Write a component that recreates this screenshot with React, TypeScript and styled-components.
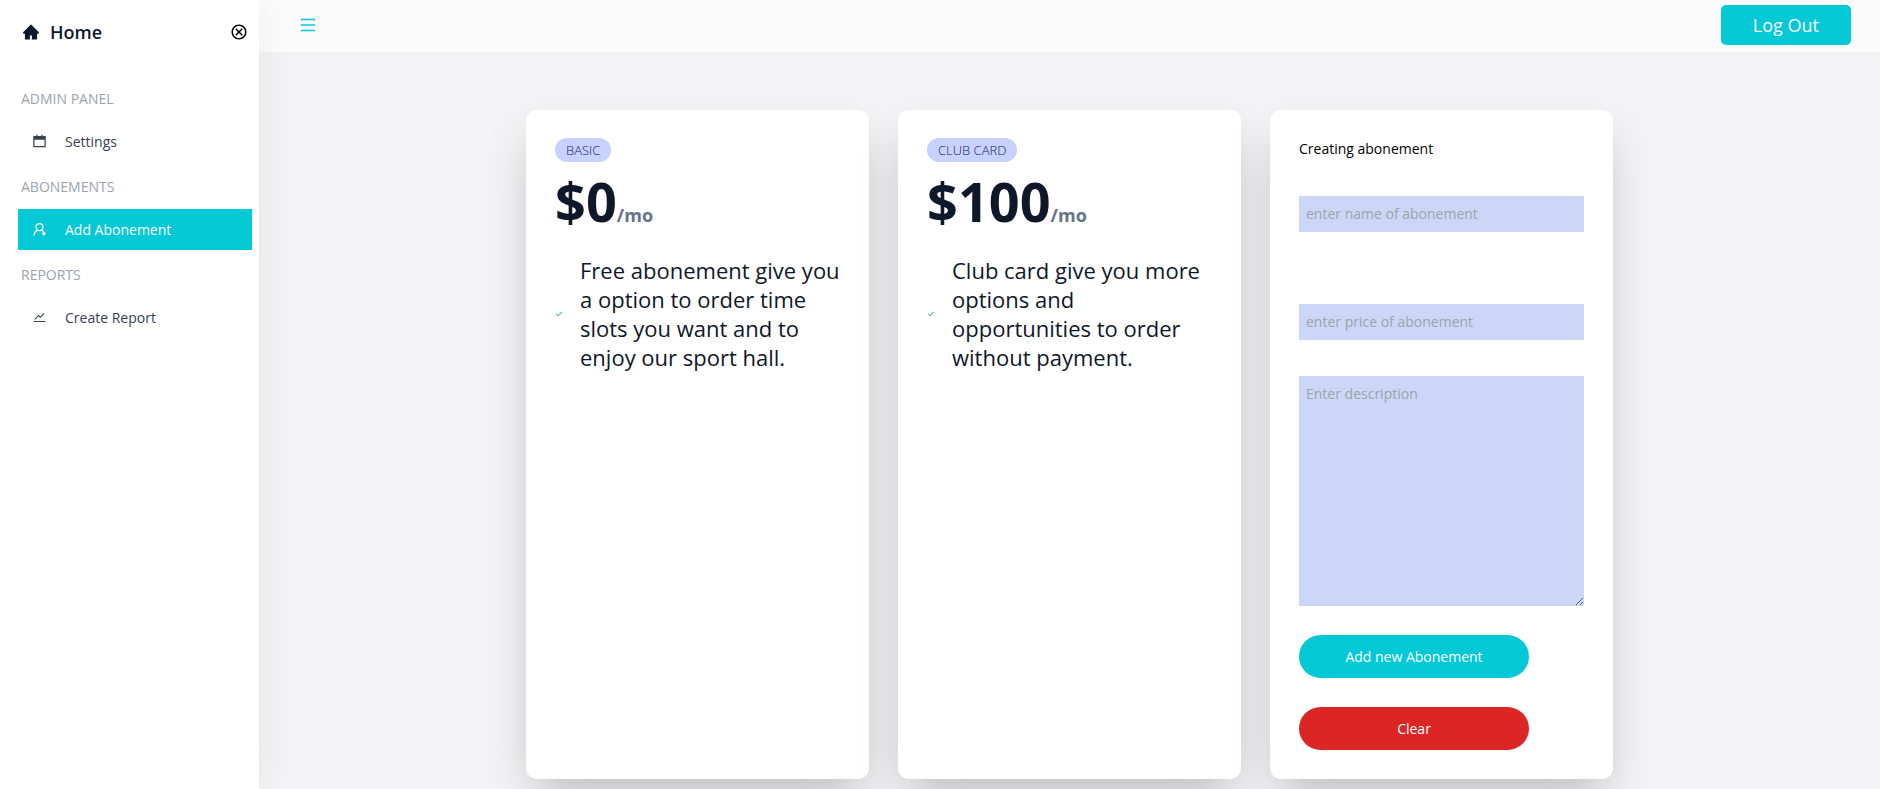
import React from "react";
import styled, { createGlobalStyle } from "styled-components";
import { AiFillHome, AiOutlineMenu, AiOutlineStock } from "react-icons/ai";
import { MdOutlineCancel } from "react-icons/md";

const GlobalStyle = createGlobalStyle`
  *, *::before, *::after { box-sizing: border-box; }
  body {
    margin: 0;
    background: #f3f3f6;
    color: #000;
    font-family: "Open Sans", sans-serif;
    font-size: 14px;
    line-height: 22px;
  }
  h1, h2, p, ul { margin: 0; padding: 0; font-weight: inherit; }
  ul { list-style: none; }
  button, input, textarea { font: inherit; border: 0; margin: 0; }
  button { cursor: pointer; }
  a { color: inherit; text-decoration: none; }
`;

const Page = styled.div`
  display: flex;
  min-height: 100vh;
`;

const Sidebar = styled.aside`
  flex: 0 0 259px;
  background: #fff;
  padding: 0 7px 0 18px;
  box-shadow: 0 0 40px rgba(0, 0, 0, 0.06);
  z-index: 1;
`;

const SidebarHeader = styled.div`
  display: flex;
  align-items: center;
  justify-content: space-between;
  height: 64px;
  padding: 0 4px;
`;

const HomeLink = styled.a`
  display: flex;
  align-items: center;
  gap: 10px;
  color: #0f172a;
  font-size: 18px;
  font-weight: 600;
`;

const IconButton = styled.button<{ $color: string }>`
  display: flex;
  padding: 0;
  background: none;
  color: ${(p) => p.$color};
  font-size: 18px;
`;

const Menu = styled.nav`
  display: flex;
  flex-direction: column;
  gap: 14px;
  margin-top: 24px;
`;

const MenuTitle = styled.h2`
  padding-left: 3px;
  margin-bottom: 11px;
  color: #9ca3af;
  font-size: 14px;
  line-height: 22px;
  text-transform: uppercase;
`;

const MenuLink = styled.a<{ $active?: boolean }>`
  display: flex;
  align-items: center;
  gap: 18px;
  height: 41px;
  padding-left: 14px;
  background: ${(p) => (p.$active ? "#03c9d7" : "transparent")};
  color: ${(p) => (p.$active ? "#fff" : "#374151")};

  svg {
    width: 15px;
    height: 15px;
  }
`;

const Content = styled.div`
  flex: 1;
  min-width: 0;
`;

const TopBar = styled.header`
  display: flex;
  align-items: center;
  justify-content: space-between;
  height: 52px;
  padding: 0 29px 2px 40px;
  background: #fbfbfb;
`;

const LogOut = styled.button`
  height: 40px;
  padding: 0 32px;
  border-radius: 5px;
  background: #03c9d7;
  color: #fff;
  font-size: 18px;
`;

const Cards = styled.main`
  display: flex;
  justify-content: center;
  gap: 29px;
  padding: 58px 29px 10px;
`;

const Card = styled.section`
  flex: 0 1 343px;
  padding: 28px 29px 29px;
  border-radius: 11px;
  background: #fff;
  box-shadow: 0 22px 45px -11px rgba(0, 0, 0, 0.25);
`;

const Badge = styled.h2`
  display: inline-block;
  padding: 0 11px;
  border-radius: 12px;
  background: #c7d2fe;
  color: #1e1b6b;
  font-size: 13px;
  font-weight: 300;
  line-height: 24px;
  text-transform: uppercase;
`;

const Price = styled.p`
  margin-top: 12px;
  color: #0f172a;
  font-size: 54px;
  font-weight: 700;
  line-height: 54px;

  span {
    color: #64748b;
    font-size: 18px;
  }
`;

const Feature = styled.li`
  display: flex;
  align-items: center;
  gap: 17px;
  margin-top: 14px;
  color: #0f172a;
  font-size: 22px;
  line-height: 29px;

  svg {
    flex: none;
    width: 8px;
    height: 8px;
    color: #059669;
  }
`;

const Form = styled.form`
  display: flex;
  flex-direction: column;
`;

const FormTitle = styled.h2`
  font-size: 14px;
  line-height: 22px;
  margin-bottom: 36px;
`;

const fieldStyles = `
  width: 100%;
  padding: 7px;
  border-radius: 0;
  outline: none;
  background: #ccd6f6;
  &::placeholder { color: #9ca3af; opacity: 1; }
`;

const TextField = styled.input<{ $space: number }>`
  ${fieldStyles}
  height: 36px;
  padding: 6px 7px 8px;
  margin-bottom: ${(p) => p.$space}px;
`;

const Description = styled.textarea`
  ${fieldStyles}
  height: 230px;
  resize: both;
`;

const PillButton = styled.button<{ $color: string }>`
  width: 230px;
  max-width: 100%;
  height: 43px;
  margin-top: 29px;
  border-radius: 22px;
  background: ${(p) => p.$color};
  color: #fff;
`;

const CalendarIcon = () => (
  <svg viewBox="0 0 24 24" fill="currentColor" aria-hidden="true">
    <path
      fillRule="evenodd"
      d="M17 3h4a1 1 0 0 1 1 1v16a1 1 0 0 1-1 1H3a1 1 0 0 1-1-1V4a1 1 0 0 1 1-1h4V1h2v2h6V1h2zM4 9v10h16V9z"
    />
  </svg>
);

const MemberIcon = () => (
  <svg viewBox="0 0 24 24" fill="none" stroke="currentColor" strokeWidth="2" aria-hidden="true">
    <circle cx="12" cy="8" r="5.6" />
    <path d="M3.500 21.500c0-4.500 2.500-7.500 6-8.500M14.500 13c1.800.500 3 1.300 4 2.500" />
    <path d="M19 15l3.500 3.500L19 22l-3.500-3.500z" fill="currentColor" stroke="none" />
  </svg>
);

const CheckIcon = () => (
  <svg viewBox="0 0 24 24" fill="none" stroke="currentColor" strokeWidth="3" strokeLinecap="round" strokeLinejoin="round" aria-hidden="true">
    <path d="M5 13l4 4L19 7" />
  </svg>
);

const menu = [
  { title: "Admin Panel", label: "Settings", icon: <CalendarIcon /> },
  { title: "Abonements", label: "Add Abonement", icon: <MemberIcon />, active: true },
  { title: "Reports", label: "Create Report", icon: <AiOutlineStock /> },
];

const plans = [
  {
    name: "Basic",
    price: 0,
    text: "Free abonement give you a option to order time slots you want and to enjoy our sport hall.",
  },
  {
    name: "Club card",
    price: 100,
    text: "Club card give you more options and opportunities to order without payment.",
  },
];

export default function App() {
  return (
    <>
      <GlobalStyle />
      <Page>
        <Sidebar>
          <SidebarHeader>
            <HomeLink href="#home">
              <AiFillHome />
              Home
            </HomeLink>
            <IconButton type="button" $color="#000" aria-label="Close menu">
              <MdOutlineCancel />
            </IconButton>
          </SidebarHeader>
          <Menu>
            {menu.map((m) => (
              <div key={m.title}>
                <MenuTitle>{m.title}</MenuTitle>
                <MenuLink href="#" $active={m.active}>
                  {m.icon}
                  {m.label}
                </MenuLink>
              </div>
            ))}
          </Menu>
        </Sidebar>
        <Content>
          <TopBar>
            <IconButton type="button" $color="#03c9d7" aria-label="Open menu">
              <AiOutlineMenu />
            </IconButton>
            <LogOut type="button">Log Out</LogOut>
          </TopBar>
          <Cards>
            {plans.map((plan) => (
              <Card key={plan.name}>
                <Badge>{plan.name}</Badge>
                <Price>
                  ${plan.price}
                  <span>/mo</span>
                </Price>
                <ul>
                  <Feature>
                    <CheckIcon />
                    <p>{plan.text}</p>
                  </Feature>
                </ul>
              </Card>
            ))}
            <Card>
              <Form>
                <FormTitle>Creating abonement</FormTitle>
                <TextField $space={72} aria-label="Name" placeholder="enter name of abonement" />
                <TextField $space={36} aria-label="Price" placeholder="enter price of abonement" />
                <Description aria-label="Description" placeholder="Enter description" />
                <PillButton type="button" $color="#03c9d7">Add new Abonement</PillButton>
                <PillButton type="reset" $color="#dc2626">Clear</PillButton>
              </Form>
            </Card>
          </Cards>
        </Content>
      </Page>
    </>
  );
}
